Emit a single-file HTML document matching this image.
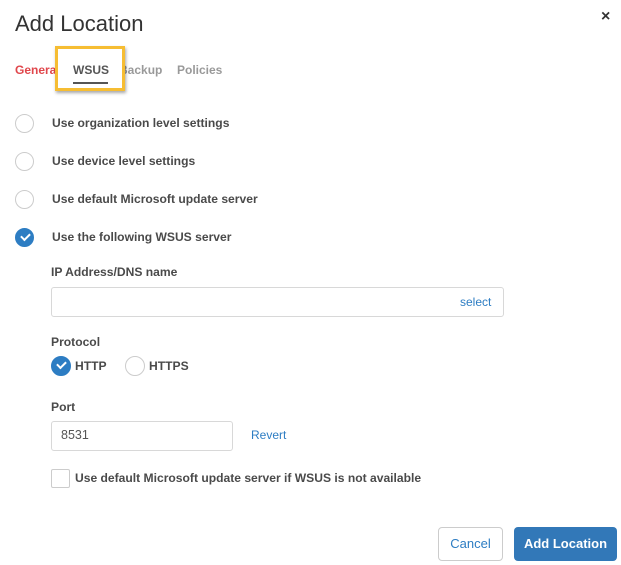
<!DOCTYPE html>
<html><head><style>
*{box-sizing:border-box;margin:0;padding:0}
body{width:621px;height:565px;background:#fff;font-family:"Liberation Sans",sans-serif;position:relative;overflow:hidden;color:#444}
.a{position:absolute;white-space:nowrap}
.r{position:absolute;width:19px;height:19px;border-radius:50%;border:1px solid #ccc;background:#fff}
.r.on{background:#2d7dc3;border-color:#2d7dc3}
.r.on:after{content:"";position:absolute;left:5px;top:4px;width:7px;height:4px;border-left:2px solid #fff;border-bottom:2px solid #fff;transform:rotate(-45deg)}
.lb{font-size:12.1px;font-weight:bold;color:#4a4a4a}
.inp{position:absolute;border:1px solid #d8d8d8;border-radius:3px;background:#fff}
</style></head><body>
<div class="a" style="left:15px;top:11px;font-size:22px;color:#333">Add Location</div>
<div class="a" style="left:601px;top:8px;font-size:16px;font-weight:bold;color:#333">×</div>
<div class="a" style="left:15px;top:63px;font-size:12px;font-weight:bold;color:#e0474c">General</div>
<div class="a" style="left:119px;top:63px;font-size:12px;font-weight:bold;color:#999">Backup</div>
<div class="a" style="left:177px;top:63px;font-size:12px;font-weight:bold;color:#999">Policies</div>
<div class="a" style="left:55px;top:46px;width:70px;height:45px;background:#fff;border:3px solid #f6bd33;box-shadow:1px 2px 3px rgba(0,0,0,.35)"></div>
<div class="a" style="left:73px;top:63px;font-size:12px;font-weight:bold;color:#555">WSUS</div>
<div class="a" style="left:73px;top:82px;width:35px;height:2px;background:#555"></div>
<div class="r" style="left:15px;top:114px"></div><div class="a lb" style="left:52px;top:116px">Use organization level settings</div>
<div class="r" style="left:15px;top:152px"></div><div class="a lb" style="left:52px;top:154px">Use device level settings</div>
<div class="r" style="left:15px;top:190px"></div><div class="a lb" style="left:52px;top:192px">Use default Microsoft update server</div>
<div class="r on" style="left:15px;top:228px"></div><div class="a lb" style="left:52px;top:230px">Use the following WSUS server</div>
<div class="a lb" style="left:51px;top:265px">IP Address/DNS name</div>
<div class="inp" style="left:51px;top:287px;width:453px;height:30px"></div>
<div class="a" style="left:460px;top:295px;font-size:12px;color:#2d7dc3">select</div>
<div class="a lb" style="left:51px;top:335px">Protocol</div>
<div class="r on" style="left:51px;top:356px;width:20px;height:20px"></div><div class="a lb" style="left:75px;top:359px">HTTP</div>
<div class="r" style="left:125px;top:356px;width:20px;height:20px"></div><div class="a lb" style="left:149px;top:359px">HTTPS</div>
<div class="a lb" style="left:51px;top:400px">Port</div>
<div class="inp" style="left:51px;top:421px;width:182px;height:30px"></div>
<div class="a" style="left:61px;top:428px;font-size:12.5px;color:#555">8531</div>
<div class="a" style="left:251px;top:428px;font-size:12px;color:#2d7dc3">Revert</div>
<div class="a" style="left:51px;top:469px;width:19px;height:19px;border:1px solid #ccc;border-radius:2px"></div>
<div class="a lb" style="left:75px;top:471px">Use default Microsoft update server if WSUS is not available</div>
<div class="a" style="left:438px;top:527px;width:65px;height:34px;border:1px solid #ccc;border-radius:4px;font-size:13px;color:#2d7dc3;text-align:center;line-height:32px">Cancel</div>
<div class="a" style="left:514px;top:527px;width:103px;height:34px;background:#3278b8;border-radius:4px;font-size:13px;font-weight:bold;color:#fff;text-align:center;line-height:34px">Add Location</div>
</body></html>
